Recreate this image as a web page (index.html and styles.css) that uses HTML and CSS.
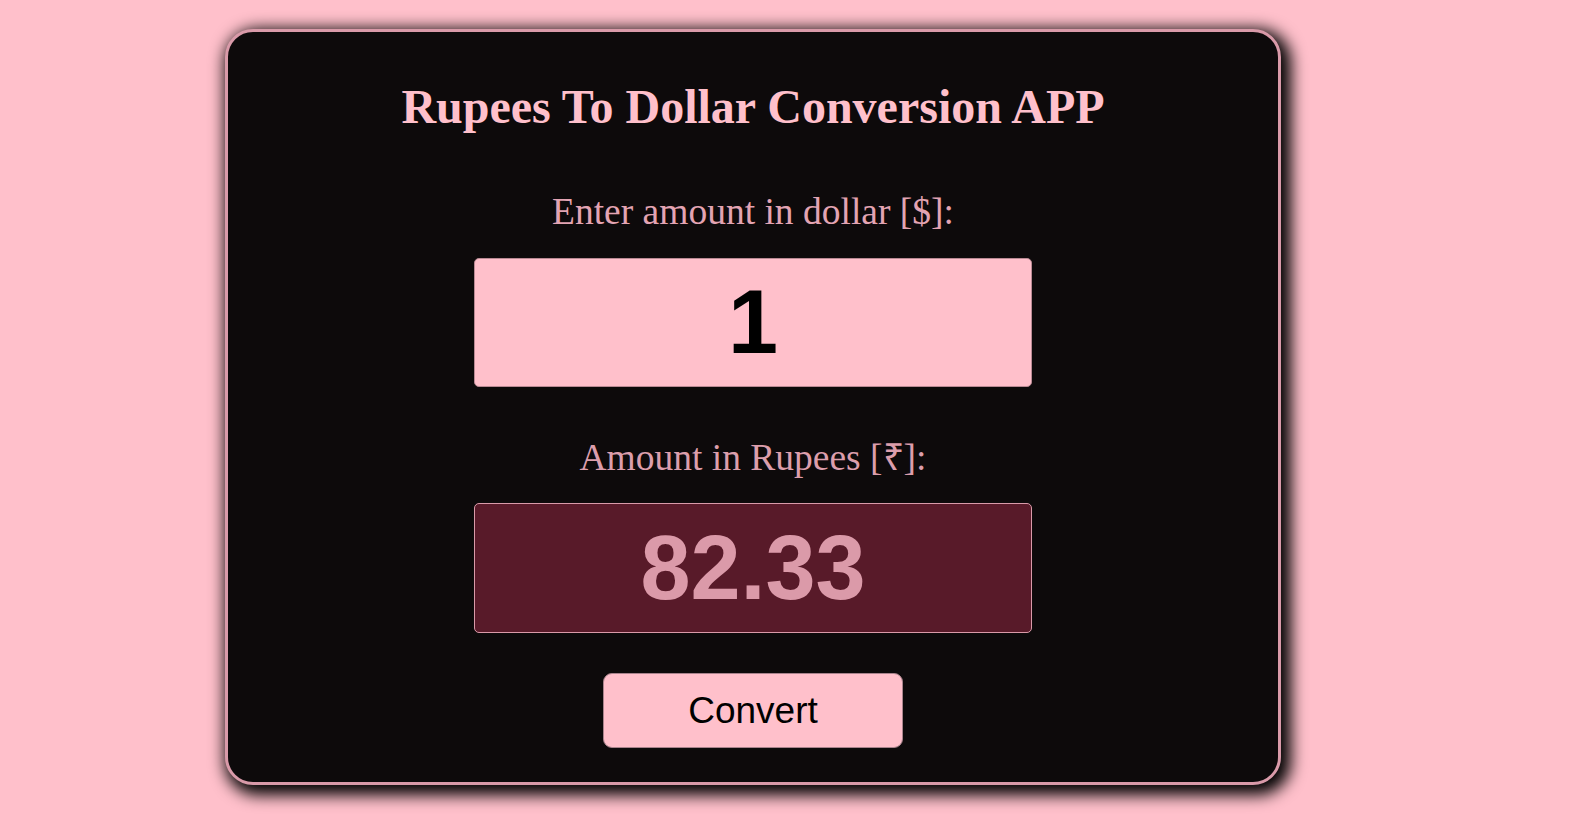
FILE: index.html
```html
<!DOCTYPE html>
<html lang="en">
<head>
<meta charset="utf-8">
<title>Rupees To Dollar Conversion APP</title>
<link rel="stylesheet" href="styles.css">
</head>
<body>
  <main class="card">
    <h1 class="title">Rupees To Dollar Conversion APP</h1>
    <label class="label label-first" for="dollar">Enter amount in dollar [$]:</label>
    <input class="field field-in" id="dollar" type="text" value="1">
    <label class="label label-second" for="rupee">Amount in Rupees [₹]:</label>
    <input class="field field-out" id="rupee" type="text" value="82.33" readonly>
    <button class="convert" type="button">Convert</button>
  </main>
</body>
</html>
```

FILE: styles.css
```css
html, body {
  margin: 0;
  padding: 0;
  height: 100%;
}

body {
  background: #ffc0cb;
  font-family: "Liberation Serif", "Times New Roman", serif;
  overflow: hidden;
}

.card {
  box-sizing: border-box;
  width: 1056px;
  height: 756px;
  margin: 29px 0 0 225px;
  padding: 48px 0 0;
  background: #0d0a0b;
  border: 3px solid #d99aa9;
  border-radius: 28px;
  box-shadow: 5px 5px 16px 5px #000;
  display: flex;
  flex-direction: column;
  align-items: center;
}

.title {
  margin: 0;
  font-size: 48px;
  line-height: 53px;
  font-weight: bold;
  color: #ffc0cb;
}

.label {
  display: block;
  font-size: 37.5px;
  line-height: 42px;
  color: #e3a4b3;
}

.label-first {
  margin-top: 58px;
}

.label-second {
  margin-top: 50px;
  color: #dc9eac;
}

.field {
  box-sizing: border-box;
  width: 558px;
  margin: 25px 0 0;
  padding: 0;
  border-radius: 5px;
  font-family: "Liberation Sans", Arial, sans-serif;
  font-size: 90px;
  font-weight: bold;
  text-align: center;
  outline: none;
}

.field-in {
  height: 129px;
  background: #ffc0cb;
  color: #000;
  border: 1px solid #b98a94;
}

.field-out {
  height: 130px;
  margin-top: 24px;
  background: #581a29;
  color: #db9aa9;
  border: 1px solid #d99aa9;
}

.convert {
  box-sizing: border-box;
  width: 300px;
  height: 75px;
  margin-top: 40px;
  padding: 0;
  background: #ffc0cb;
  color: #000;
  border: 1px solid #a8838c;
  border-radius: 9px;
  font-family: "Liberation Sans", Arial, sans-serif;
  font-size: 37px;
  cursor: pointer;
}
```
